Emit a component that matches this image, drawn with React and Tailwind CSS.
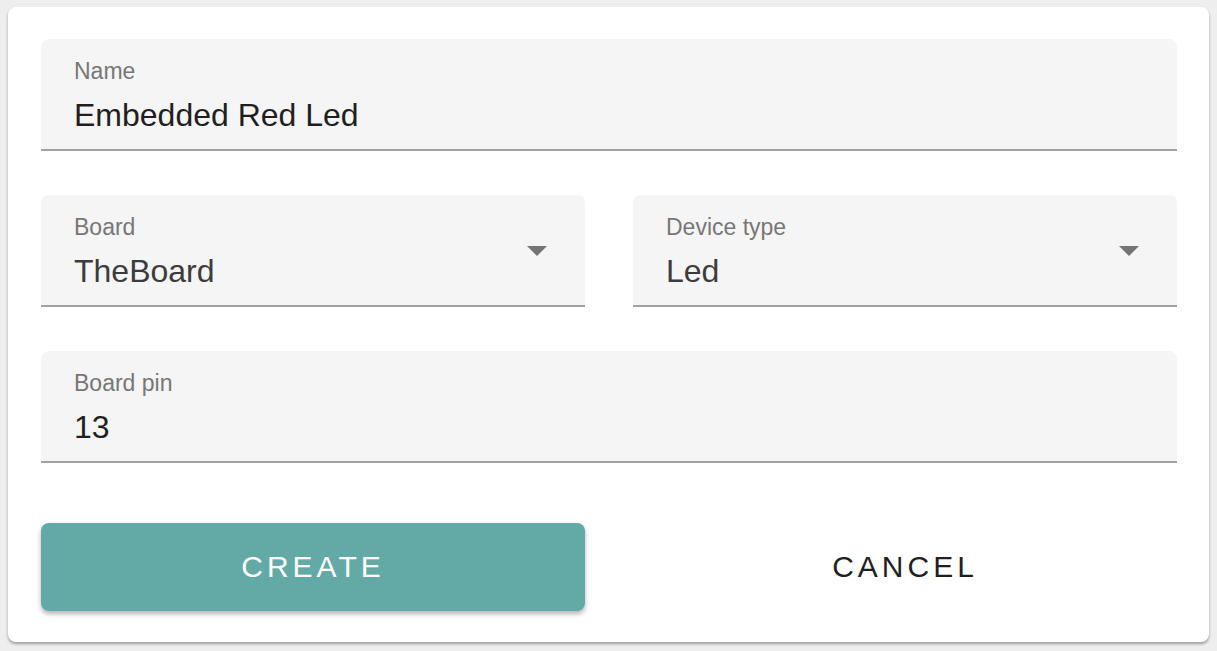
import { useState } from "react";

const font = { fontFamily: '"Liberation Sans", Arial, sans-serif' };

const Caret = () => (
  <svg viewBox="0 0 24 24" className="absolute right-[24px] top-1/2 -translate-y-1/2 w-[48px] h-[48px]" fill="#757575">
    <path d="M7 10l5 5 5-5z" />
  </svg>
);

const Field = ({ label, value, select, valueClass }) => (
  <div className="relative h-[112px] bg-[#f5f5f5] rounded-t-[8px] border-b-2 border-[#a2a2a2] px-[33px]">
    <div className="pt-[15px] text-[23px] leading-[34px] text-[#777777]">{label}</div>
    <div className={`mt-[4px] text-[32px] leading-[46px] ${valueClass || "text-[#1f1f1f]"}`}>{value}</div>
    {select && <Caret />}
  </div>
);

const App = () => {
  const [name] = useState("Embedded Red Led");

  return (
    <div className="min-h-[651px] bg-[#eeeeee] px-[8px] pt-[7px] pb-[9px]" style={font}>
      <div className="bg-white rounded-[8px] shadow-[0_2px_3px_rgba(0,0,0,0.35)] pl-[33px] pr-[32px] pt-[32px] pb-[31px]">
        <div className="flex flex-col gap-[44px]">
          <Field label="Name" value={name} />
          <div className="grid grid-cols-2 gap-[48px]">
            <Field label="Board" value="TheBoard" select valueClass="text-[#3c3c3c]" />
            <Field label="Device type" value="Led" select valueClass="text-[#3c3c3c]" />
          </div>
          <Field label="Board pin" value="13" />
        </div>
        <div className="grid grid-cols-2 gap-[48px] mt-[60px]">
          <button className="h-[88px] pb-[2px] rounded-[8px] bg-[#63a9a5] text-white text-[30px] tracking-[4px] shadow-[0_3px_5px_rgba(0,0,0,0.3)]">
            CREATE
          </button>
          <button className="h-[88px] pb-[2px] rounded-[8px] text-[#1f1f1f] text-[30px] tracking-[4px]">
            CANCEL
          </button>
        </div>
      </div>
    </div>
  );
};

export default App;
